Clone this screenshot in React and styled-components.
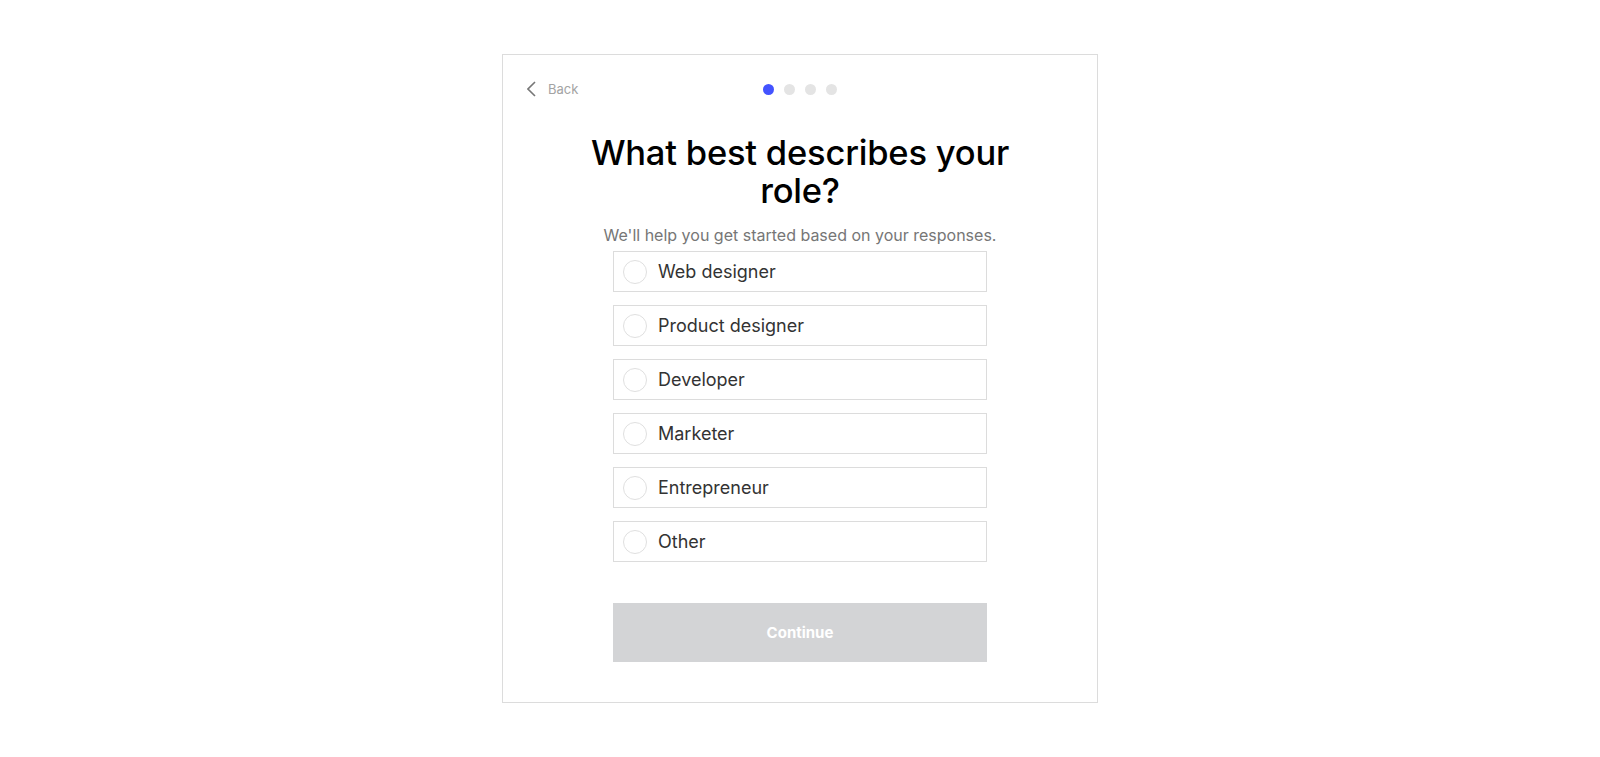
import React, { useState } from "react";
import styled, { createGlobalStyle } from "styled-components";

const GlobalStyle = createGlobalStyle`
	body {
		margin: 0;
		background: #ffffff;
		font-family: "Inter", "Liberation Sans", sans-serif;
	}
`;

const Page = styled.div`
	display: flex;
	justify-content: center;
	padding-top: 54px;
`;

const Card = styled.div`
	width: 546px;
	border: 1px solid #dcdcdc;
	padding: 24px 24px 40px;
	display: flex;
	flex-direction: column;
	align-items: center;
`;

const Header = styled.div`
	position: relative;
	width: 100%;
	height: 20px;
	display: flex;
	align-items: center;
	justify-content: center;
`;

const BackLink = styled.button`
	position: absolute;
	left: 0;
	top: 0;
	height: 20px;
	display: flex;
	align-items: center;
	gap: 12px;
	padding: 0;
	border: none;
	background: none;
	color: #a3a3a3;
	font-family: "Inter", "Liberation Sans", sans-serif;
	font-size: 13px;
	cursor: pointer;
`;

const Dots = styled.div`
	display: flex;
	gap: 10px;
`;

const Dot = styled.span`
	width: 11px;
	height: 11px;
	border-radius: 50%;
	background: ${(p) => (p.active ? "#4353ff" : "#e4e4e4")};
`;

const Title = styled.h1`
	margin: 35px 0 0;
	max-width: 450px;
	text-align: center;
	font-size: 34.5px;
	line-height: 38px;
	font-weight: 500;
	letter-spacing: -0.2px;
	color: #000;
`;

const Subtitle = styled.p`
	margin: 15px 0 0;
	font-size: 16px;
	line-height: 20px;
	color: #767676;
`;

const Options = styled.div`
	margin-top: 6px;
	width: 374px;
	display: flex;
	flex-direction: column;
	gap: 13px;
`;

const Option = styled.label`
	box-sizing: border-box;
	height: 41px;
	display: flex;
	align-items: center;
	gap: 11px;
	padding: 0 9px;
	border: 1px solid ${(p) => (p.checked ? "#4353ff" : "#dcdcdc")};
	font-size: 18px;
	color: #333;
	cursor: pointer;
`;

const Radio = styled.span`
	box-sizing: border-box;
	width: 24px;
	height: 24px;
	border-radius: 50%;
	border: 1px solid #e0e0e0;
	background: ${(p) => (p.checked ? "#4353ff" : "#fff")};
	flex-shrink: 0;
`;

const ContinueBtn = styled.button`
	margin-top: 41px;
	width: 374px;
	height: 59px;
	border: none;
	background: ${(p) => (p.disabled ? "#d3d4d6" : "#4353ff")};
	color: #fff;
	font-family: "Inter", "Liberation Sans", sans-serif;
	font-size: 15px;
	font-weight: 700;
`;

const roles = [
	"Web designer",
	"Product designer",
	"Developer",
	"Marketer",
	"Entrepreneur",
	"Other",
];

const App = () => {
	const [role, setRole] = useState("");
	return (
		<Page>
			<GlobalStyle />
			<Card>
				<Header>
					<BackLink>
						<svg width="9" height="16" viewBox="0 0 9 16" fill="none">
							<path d="M8 1L1 8l7 7" stroke="#777" strokeWidth="1.6" />
						</svg>
						Back
					</BackLink>
					<Dots>
						{[0, 1, 2, 3].map((i) => (
							<Dot key={i} active={i === 0} />
						))}
					</Dots>
				</Header>
				<Title>What best describes your role?</Title>
				<Subtitle>We'll help you get started based on your responses.</Subtitle>
				<Options>
					{roles.map((r) => (
						<Option key={r} checked={role === r} onClick={() => setRole(r)}>
							<Radio checked={role === r} />
							{r}
						</Option>
					))}
				</Options>
				<ContinueBtn disabled={!role}>Continue</ContinueBtn>
			</Card>
		</Page>
	);
};

export default App;
